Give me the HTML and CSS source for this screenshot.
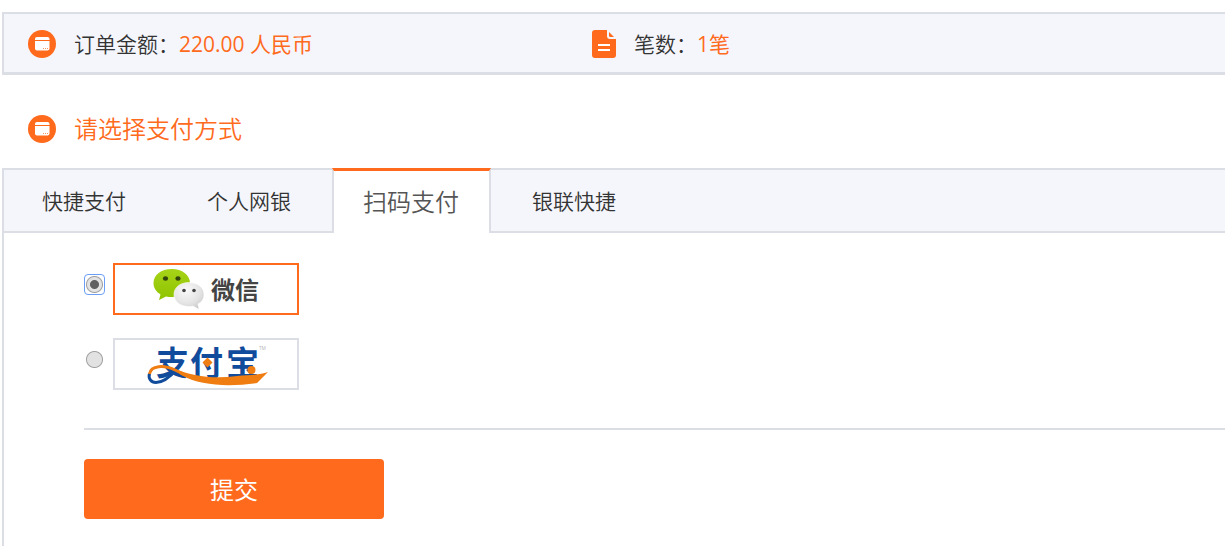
FILE: index.html
```html
<!DOCTYPE html>

<html lang="zh-CN">
    <head>
        <title>请选择支付方式</title>
        <meta charset="UTF-8">
        <link rel="stylesheet" href="styles.css">
    </head>
    <body>
        <div class="summary">
            <div class="summary_item amount">
                <svg class="icon" width="28" height="28" viewBox="0 0 28 28">
                    <circle cx="14" cy="14" r="14" fill="#ff6a1c"/>
                    <path d="M7 10V9q0-2 2-2h10.500q2 0 2 2v1z" fill="#fff"/>
                    <path d="M7 11h14.500v7.500q0 2-2 2H9q-2 0-2-2z" fill="#fff"/>
                    <path d="M15 18.500h1M17 18.500h1M19 18.500h1" stroke="#ff6a1c" stroke-opacity="0.700"/>
                </svg>
                <p>订单金额：<span class="value">220.00 人民币</span></p>
            </div>
            <div class="summary_item">
                <svg class="icon" width="24" height="28" viewBox="0 0 24 28">
                    <path d="M3 0h12v6q0 3 3 3h6v16q0 3-3 3H3q-3 0-3-3V3q0-3 3-3z" fill="#ff6a1c"/>
                    <path d="M17 2l5 5h-3.500q-1.500 0-1.500-1.500z" fill="#ff6a1c"/>
                    <path d="M6 15h12M6 20h12" stroke="#fff" stroke-width="2"/>
                </svg>
                <p>笔数：<span class="value">1笔</span></p>
            </div>
        </div>

        <div class="title">
            <svg class="icon" width="28" height="28" viewBox="0 0 28 28">
                <circle cx="14" cy="14" r="14" fill="#ff6a1c"/>
                <path d="M7 10V9q0-2 2-2h10.500q2 0 2 2v1z" fill="#fff"/>
                <path d="M7 11h14.500v7.500q0 2-2 2H9q-2 0-2-2z" fill="#fff"/>
                <path d="M15 18.500h1M17 18.500h1M19 18.500h1" stroke="#ff6a1c" stroke-opacity="0.700"/>
            </svg>
            <h1>请选择支付方式</h1>
        </div>

        <div class="tabs">
            <a class="tab" href="#">快捷支付</a>
            <a class="tab" href="#">个人网银</a>
            <a class="tab active" href="#">扫码支付</a>
            <a class="tab" href="#">银联快捷</a>
        </div>

        <form class="panel">
            <div class="option">
                <input type="radio" name="pay" id="pay_wechat" value="wechat" checked autofocus>
                <label class="logo" for="pay_wechat">
                    <svg width="182" height="48" viewBox="0 0 182 48">
                        <defs>
                            <linearGradient id="green" x1="0" y1="0" x2="0" y2="1">
                                <stop offset="0" stop-color="#a6d318"/>
                                <stop offset="1" stop-color="#8fc400"/>
                            </linearGradient>
                            <radialGradient id="grey" cx="0.4" cy="0.3" r="0.8">
                                <stop offset="0" stop-color="#fafafa"/>
                                <stop offset="0.6" stop-color="#e4e4e4"/>
                                <stop offset="1" stop-color="#c4c4c4"/>
                            </radialGradient>
                        </defs>
                        <path d="M57 4C46 4 38.500 10 38.500 18c0 5 2.500 8.500 7 11.500L44 35l7-3.500c2 .5 4 .5 6 .5 11 0 18-6 18-14S67 4 57 4z" fill="url(#green)"/>
                        <ellipse cx="50.500" cy="13.500" rx="2.600" ry="2.200" fill="#33450a"/>
                        <ellipse cx="63" cy="13.500" rx="2.600" ry="2.200" fill="#33450a"/>
                        <path d="M74 17.500c-9 0-15 5-15 12s6 12 15 12q2 0 4-.5l6 3.500-1-5.500c4-2 6-5.500 6-9.500 0-7-6-12-15-12z" fill="url(#grey)" stroke="#fff" stroke-width="0.600"/>
                        <circle cx="69" cy="25.500" r="1.800" fill="#444"/>
                        <circle cx="79" cy="25.500" r="1.800" fill="#444"/>
                        <text class="wechat_name" x="96" y="34">微信</text>
                    </svg>
                </label>
            </div>
            <div class="option">
                <input type="radio" name="pay" id="pay_alipay" value="alipay">
                <label class="logo" for="pay_alipay">
                    <svg width="182" height="48" viewBox="0 0 182 48">
                        <text class="alipay_name" x="41" y="35">支</text>
                        <text class="alipay_name" x="75" y="35">付</text>
                        <text class="alipay_name" x="111" y="35">宝</text>
                        <path d="M62 29C55 37 48 42.500 41 42.500c-5 0-8-4-6.500-9" fill="none" stroke="#114b9b" stroke-width="3"/>
                        <path d="M34.500 34C36 25 49 25 60 30c7 3 13 7 22 9" fill="none" stroke="#f07d12" stroke-width="3"/>
                        <path d="M58 28C78 37 100 39 122 36c12-1 22-1 31-4l-11 11C114 47 86 46 66 35z" fill="#f07d12"/>
                        <path d="M92.500 17.500l5 5-5 5-5-5z" fill="#f07d12"/>
                        <circle cx="136.500" cy="30" r="4" fill="#f07d12"/>
                        <text class="tm" x="144" y="10">TM</text>
                    </svg>
                </label>
            </div>
            <div class="submit">
                <button type="button">提交</button>
            </div>
        </form>
    </body>
</html>
```
FILE: styles.css
```css
* {
    box-sizing: border-box;
}
body {
    display: flex;
    flex-direction: column;
    min-height: 100vh;
    margin: 0;
    padding: 12px 0 0 2px;
    background: #fff;
    color: #333;
    font-family: "Open Sans", "Noto Sans CJK SC", sans-serif;
    font-size: 21px;
    font-weight: 350;
    line-height: 30px;
}
p, h1 {
    margin: 0;
}
.icon {
    flex: none;
}

/* order summary */
.summary {
    display: flex;
    padding: 15px 0 13px;
    border: 2px solid #dcdee6;
    border-width: 2px 0 3px 2px;
    background: #f5f6fb;
}
.summary_item {
    display: flex;
    align-items: center;
    gap: 18px;
    padding-left: 24px;
}
.amount {
    flex: 0 0 564px;
}
.value {
    color: #ff6a1c;
    font-weight: 400;
}
.title {
    display: flex;
    align-items: center;
    gap: 18px;
    padding: 39px 0 24px 26px;
    color: #ff6a1c;
}
.title h1 {
    font-size: 24px;
    font-weight: 350;
    line-height: 30px;
}

/* tabs */
.tabs {
    display: flex;
    gap: 1px;
    height: 65px;
    border: 2px solid #dcdee6;
    border-right: 0;
    background: #f5f6fb;
}
.tab {
    padding: 0 40px;
    color: #333;
    line-height: 62px;
    text-decoration: none;
}
.tab:first-child {
    padding-left: 38px;
}
.active {
    margin: -2px 0;
    padding: 0 30px 0 29px;
    border: 2px solid #dcdee6;
    border-top: 3px solid #ff6a1c;
    border-bottom: 0;
    background: #fff;
    color: #555;
    font-size: 24px;
}

/* payment options */
.panel {
    flex: 1;
    padding: 30px 0 27px 80px;
    border-left: 2px solid #dcdee6;
}
.option {
    display: flex;
    align-items: flex-start;
    gap: 10px;
    margin-bottom: 23px;
}
/* the circle is a background, so the focus ring stays square */
.option input {
    appearance: none;
    width: 17px;
    height: 17px;
    margin: 13px 0 0 2px;
    border-radius: 2px;
    background: radial-gradient(circle, #e2e2e2 7px, #a0a0a0 8px, transparent 9px);
}
.option input:checked {
    background: radial-gradient(circle, #606060 4px, #e2e2e2 5px, #e2e2e2 7px, #a0a0a0 8px, transparent 9px);
}
.option input:focus {
    outline: 1px solid #6a9ff5;
    outline-offset: 1px;
}
.logo {
    border: 2px solid #dcdee6;
}
.logo svg {
    display: block;
}
input:checked + .logo {
    border-color: #ff6a1c;
}
.wechat_name {
    fill: #444;
    font-size: 24px;
    font-weight: 700;
}
.alipay_name {
    fill: #114b9b;
    font-size: 33px;
    font-weight: 700;
}
.tm {
    fill: #888;
    font-size: 5px;
}
.submit {
    margin-top: 38px;
    padding-top: 29px;
    border-top: 2px solid #dcdee6;
}
.submit button {
    width: 300px;
    height: 60px;
    padding: 0 0 2px;
    border: 0;
    border-radius: 4px;
    background: #ff6a1c;
    color: #fff;
    font-family: inherit;
    font-size: 24px;
}
```
